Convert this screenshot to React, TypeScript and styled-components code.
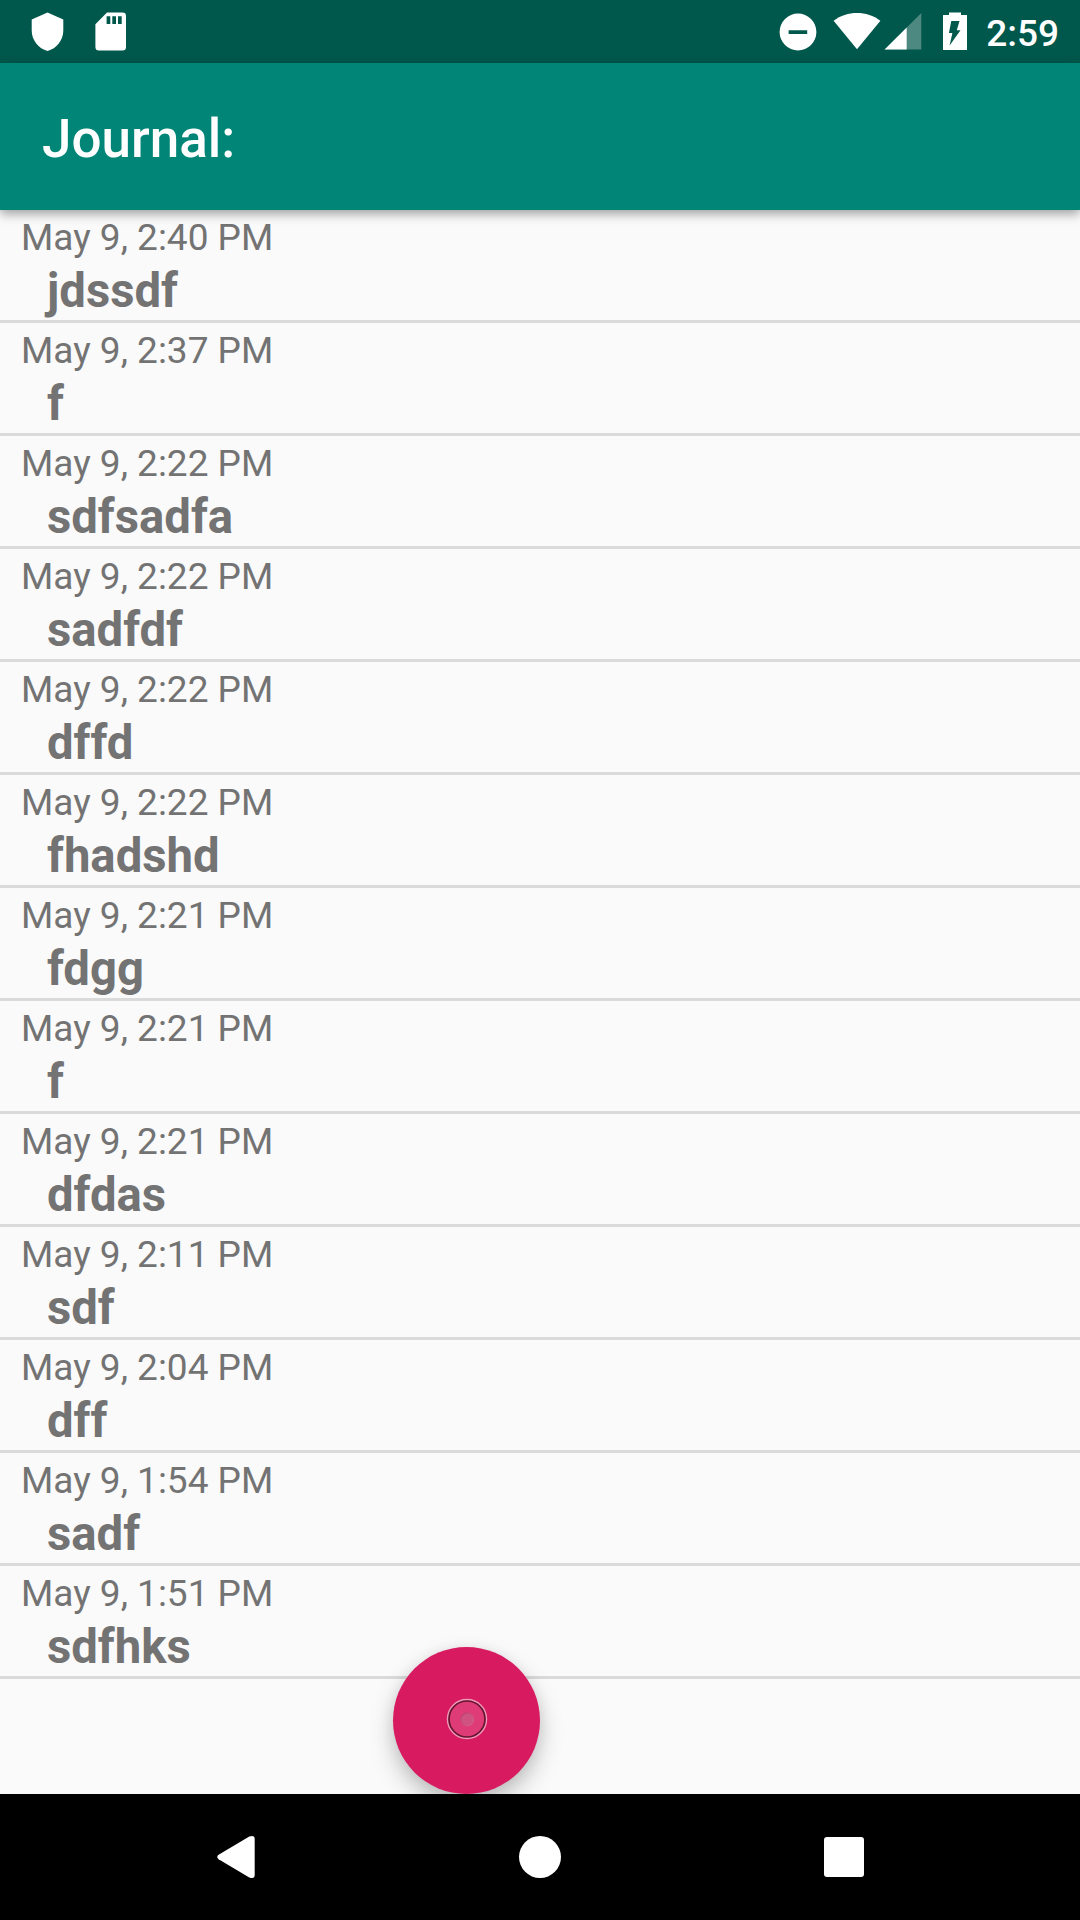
import React from "react";
import styled, { createGlobalStyle } from "styled-components";

const GlobalStyle = createGlobalStyle`
  *, *::before, *::after { box-sizing: border-box; }
  body { margin: 0; background: #fafafa; font-family: Roboto, "Noto Sans", sans-serif; }
`;

const Screen = styled.div`
  display: flex;
  flex-direction: column;
  width: 1080px;
  height: 1920px;
  overflow: hidden;
  background: #fafafa;
`;

const StatusBar = styled.div`
  display: flex;
  flex: none;
  align-items: flex-start;
  justify-content: space-between;
  height: 63px;
  padding: 12px 21px 0 31px;
  background: #00574b;
`;

const IconGroup = styled.div`
  display: flex;
  align-items: flex-start;
`;

const StatusIcon = styled.svg<{ $before?: number }>`
  display: block;
  flex: none;
  margin-left: ${(p) => p.$before ?? 0}px;
`;

const Clock = styled.span`
  margin: 0 0 0 18px;
  color: #fff;
  font-size: 37px;
  font-weight: 500;
  line-height: 43px;
`;

const AppBar = styled.header`
  display: flex;
  flex: none;
  align-items: center;
  height: 147px;
  padding: 0 42px;
  background: #008577;
  box-shadow: 0 4px 10px rgba(0, 0, 0, 0.36);
  z-index: 1;
`;

const Title = styled.h1`
  margin: 0;
  padding-top: 4px;
  color: #fff;
  font-size: 53px;
  font-weight: 500;
  line-height: 62px;
`;

const Main = styled.main`
  position: relative;
  flex: 1;
  overflow: hidden;
`;

const EntryList = styled.ul`
  margin: 0;
  padding: 0;
  list-style: none;
`;

const Entry = styled.li`
  height: 113px;
  border-bottom: 3px solid #dadada;
  color: #737373;
`;

const EntryDate = styled.div`
  padding: 2px 0 0 21px;
  font-size: 37px;
  line-height: 51px;
`;

const EntryText = styled.div`
  padding: 1px 0 0 47px;
  font-size: 47.25px;
  font-weight: 700;
  line-height: 55px;
`;

const AddButton = styled.button`
  position: absolute;
  left: 393px;
  bottom: 0;
  display: flex;
  align-items: center;
  justify-content: center;
  width: 147px;
  height: 147px;
  padding: 0 0 3px 1px;
  border: 0;
  border-radius: 50%;
  background: #d81b60;
  box-shadow: 0 12px 24px rgba(0, 0, 0, 0.22), 0 2px 14px rgba(0, 0, 0, 0.08);
`;

const NavBar = styled.nav`
  display: flex;
  flex: none;
  align-items: center;
  justify-content: center;
  gap: 206px;
  height: 126px;
  background: #000;
`;

const NavButton = styled.button`
  display: flex;
  align-items: center;
  justify-content: center;
  width: 98px;
  height: 98px;
  padding: 0;
  border: 0;
  background: none;
`;

const entries = [
  ["May 9, 2:40 PM", "jdssdf"],
  ["May 9, 2:37 PM", "f"],
  ["May 9, 2:22 PM", "sdfsadfa"],
  ["May 9, 2:22 PM", "sadfdf"],
  ["May 9, 2:22 PM", "dffd"],
  ["May 9, 2:22 PM", "fhadshd"],
  ["May 9, 2:21 PM", "fdgg"],
  ["May 9, 2:21 PM", "f"],
  ["May 9, 2:21 PM", "dfdas"],
  ["May 9, 2:11 PM", "sdf"],
  ["May 9, 2:04 PM", "dff"],
  ["May 9, 1:54 PM", "sadf"],
  ["May 9, 1:51 PM", "sdfhks"],
];

export default function App() {
  return (
    <Screen>
      <GlobalStyle />
      <StatusBar>
        <IconGroup>
          <StatusIcon width="33" height="40" fill="#fff">
            <path d="M16.5 .6L32.3 7.6V18.5C32.3 28 25.5 36.7 16.5 39C7.500 36.700 .7 28 .7 18.500V7.600Z" />
          </StatusIcon>
          <StatusIcon $before={31} width="32" height="40" fill="#fff">
            <path
              fillRule="evenodd"
              d="M12 .6H27.500Q31 .6 31 4V35Q31 38.500 27.500 38.500H4Q.4 38.500 .4 35V12.200ZM11.600 4.300V12H15.300V4.300ZM17.300 4.300V12H21V4.300ZM23 4.300V12H26.700V4.300Z"
            />
          </StatusIcon>
        </IconGroup>
        <IconGroup>
          <StatusIcon width="38" height="40" fill="#fff">
            <path fillRule="evenodd" d="M19 1.600A18.400 18.400 0 1 0 19 38.400A18.400 18.400 0 1 0 19 1.600ZM9.600 18.300H28.200V22H9.600Z" />
          </StatusIcon>
          <StatusIcon $before={16} width="48" height="40" fill="#fff">
            <path d="M24 37.300L.6 8.700C7.500 3.500 15.500 1 24 1S40.500 3.500 47.400 8.700Z" />
          </StatusIcon>
          <StatusIcon $before={3} width="38" height="40" fill="#fff">
            <path d="M.6 37.600L37.300 .9V37.600Z" fillOpacity=".3" />
            <path d="M.6 37.600L22.700 15.500V37.600Z" />
          </StatusIcon>
          <StatusIcon $before={20} width="26" height="40" fill="#fff">
            <path
              fillRule="evenodd"
              d="M7 .4H19V3H25V38H1V3H7ZM9.300 9H17.500L14.800 18.300H18.500L7.600 33.500L10.400 21H6.900Z"
            />
          </StatusIcon>
          <Clock>2:59</Clock>
        </IconGroup>
      </StatusBar>

      <AppBar>
        <Title>Journal:</Title>
      </AppBar>

      <Main>
        <EntryList>
          {entries.map(([date, text], i) => (
            <Entry key={i}>
              <EntryDate>{date}</EntryDate>
              <EntryText>{text}</EntryText>
            </Entry>
          ))}
        </EntryList>
        <AddButton aria-label="Add entry">
          <svg width="44" height="44" viewBox="0 0 44 44">
            <defs>
              <linearGradient id="dot" x1="0" y1="0" x2="1" y2="1">
                <stop offset="0" stopColor="#b5406b" />
                <stop offset="1" stopColor="#dc6290" />
              </linearGradient>
            </defs>
            <circle cx="22" cy="22" r="19.300" fill="#df3b76" stroke="#f09abb" strokeWidth="1.900" />
            <circle cx="22" cy="22" r="18" fill="none" stroke="#65152f" strokeWidth="1.700" />
            <circle cx="22.200" cy="22.400" r="6.300" fill="#cf5280" stroke="url(#dot)" strokeWidth="1.200" />
          </svg>
        </AddButton>
      </Main>

      <NavBar>
        <NavButton aria-label="Back">
          <svg width="42" height="44" fill="#fff">
            <path d="M3.600 19.800L34.300 1.600Q39.700 -.3 39.700 4V40Q39.700 44.300 34.300 42.400L3.600 24.200Q.8 22 3.600 19.800Z" />
          </svg>
        </NavButton>
        <NavButton aria-label="Home">
          <svg width="42" height="42" fill="#fff">
            <circle cx="21" cy="21" r="21" />
          </svg>
        </NavButton>
        <NavButton aria-label="Recent apps">
          <svg width="40" height="40" fill="#fff">
            <rect width="40" height="40" rx="3" />
          </svg>
        </NavButton>
      </NavBar>
    </Screen>
  );
}
